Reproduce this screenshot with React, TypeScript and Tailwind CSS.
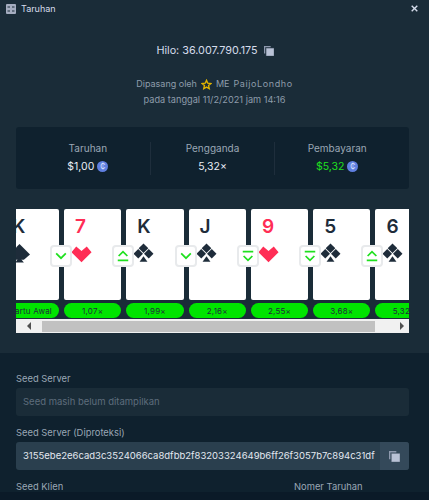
import React from "react";

const Spade = ({ className = "" }: { className?: string }) => (
  <svg viewBox="0 0 24 24" className={className} fill="#1e2c3a">
    <path d="M12 0.5 L17.5 6 L12 11.5 L6.5 6 Z" />
    <path d="M6 6.8 L11.4 12.2 L6 17.6 L0.6 12.2 Z" />
    <path d="M18 6.8 L23.4 12.2 L18 17.6 L12.6 12.2 Z" />
    <path d="M12 15 L16.5 21.5 H7.5 Z" />
  </svg>
);
const Heart = ({ className = "" }: { className?: string }) => (
  <svg viewBox="0 0 24 24" className={className} fill="#ff2d55">
    <path d="M12 22 L0.5 10.5 L6 4 L12 9 L18 4 L23.5 10.5 Z" />
  </svg>
);
const Down = () => (
  <svg viewBox="0 0 16 16" className="w-[14px] h-[14px]" fill="none" stroke="#1fe01f" strokeWidth="2">
    <path d="M2.5 5 L8 10.5 L13.5 5" />
  </svg>
);
const Up2 = () => (
  <svg viewBox="0 0 16 16" className="w-[14px] h-[14px]" fill="none" stroke="#1fe01f" strokeWidth="2">
    <path d="M3 8 L8 3 L13 8" />
    <path d="M2 13 H14" />
  </svg>
);
const Down2 = () => (
  <svg viewBox="0 0 16 16" className="w-[14px] h-[14px]" fill="none" stroke="#1fe01f" strokeWidth="2">
    <path d="M2 3 H14" />
    <path d="M3 8 L8 13 L13 8" />
  </svg>
);
const Copy = ({ className = "" }: { className?: string }) => (
  <svg viewBox="0 0 12 12" className={className}>
    <path d="M0 0 H8 V1.5 H1.5 V9 H0 Z" fill="#8e99ae" />
    <rect x="2.5" y="2.5" width="9.5" height="9.5" fill="#b9c2d6" stroke="#4e5f70" strokeWidth="0.5" />
  </svg>
);
const Coin = () => (
  <span className="inline-flex w-[11px] h-[11px] rounded-full bg-[#5f7fe0] items-center justify-center text-[7px] leading-none text-[#dfe6ff]">₵</span>
);

type C = { v: string; red?: boolean; pill: string; btn?: React.ReactNode };
const cards: C[] = [
  { v: "7", red: true, pill: "1,07×", btn: <Down /> },
  { v: "K", pill: "1,99×", btn: <Up2 /> },
  { v: "J", pill: "2,16×", btn: <Down /> },
  { v: "9", red: true, pill: "2,55×", btn: <Down2 /> },
  { v: "5", pill: "3,68×", btn: <Down2 /> },
  { v: "6", pill: "5,32×", btn: <Up2 /> },
];

const Card = ({ c }: { c: C }) => (
  <div className="relative shrink-0 w-[57.3px] flex flex-col">
    <div className="h-[91px] bg-white rounded-[2px] flex flex-col pl-[11px]">
      <span className={`mt-[6px] text-[19px] leading-[24px] font-semibold ${c.red ? "text-[#ff2d55]" : "text-[#1e2c3a]"}`}>{c.v}</span>
      <div className="mt-[4px] ml-[-4px]">
        {c.red ? <Heart className="w-[21px] h-[21px]" /> : <Spade className="w-[21px] h-[21px]" />}
      </div>
    </div>
    <div className="mt-[3px] h-[15px] rounded-full bg-[#00e400] flex items-center justify-center text-[8px] tracking-[0.2px] text-[#1e2c3a]">{c.pill}</div>
    {c.btn && (
      <div className="absolute left-[-14px] top-[36px] w-[22px] h-[22px] rounded-[4px] bg-white border-2 border-[#e8eaec] flex items-center justify-center">
        {c.btn}
      </div>
    )}
  </div>
);

const Stat = ({ label, children, border }: { label: string; children: React.ReactNode; border?: boolean }) => (
  <div className={`flex-1 flex flex-col items-center gap-[5px] h-[33px] ${border ? "border-l border-[#1e2e3c]" : ""}`}>
    <span className="text-[10px] leading-[13px] text-[#9aa7b5]">{label}</span>
    <span className="text-[10.5px] leading-[13px] flex items-center gap-[3px]">{children}</span>
  </div>
);

export default function App() {
  return (
    <div className="w-[429px] h-[500px] overflow-hidden bg-[#1a2c38] flex flex-col text-[#d5dceb]" style={{ fontFamily: "Inter, 'Noto Sans', sans-serif" }}>
      <div className="h-[353px] shrink-0 flex flex-col">
        <div className="flex items-center justify-between pl-[6px] pr-[11px] pt-[1px] h-[16px]">
          <div className="flex items-center gap-[5px]">
            <svg viewBox="0 0 10 10" className="w-[10px] h-[10px]">
              <rect width="10" height="10" rx="1" fill="#a5adc0" />
              <path d="M1.5 3 H4 M6 3 H8.5 M1.5 7 H4 M6 7 H8.5" stroke="#1a2c38" strokeWidth="1" />
            </svg>
            <span className="text-[9px] leading-[12px] text-[#d5dceb]">Taruhan</span>
          </div>
          <svg viewBox="0 0 10 10" className="w-[7px] h-[7px]" stroke="#d5dceb" strokeWidth="2">
            <path d="M1 1 L9 9 M9 1 L1 9" />
          </svg>
        </div>
        <div className="mt-[28px] pl-[1px] flex items-center justify-center gap-[6px] text-[10.8px] leading-[14px] text-[#d5dceb]">
          <span>Hilo: 36.007.790.175</span>
          <Copy className="w-[10px] h-[10px]" />
        </div>
        <div className="mt-[18px] h-[16px] flex items-center justify-center gap-[3px] text-[9px] leading-[16px] text-[#8e9cab]">
          <span>Dipasang oleh</span>
          <svg viewBox="0 0 24 24" className="w-[11px] h-[11px] mx-[1px]" fill="none" stroke="#e0b400" strokeWidth="3">
            <path d="M12 3 L14.8 9.2 L21.5 9.9 L16.5 14.4 L18 21 L12 17.6 L6 21 L7.5 14.4 L2.5 9.9 L9.2 9.2 Z" />
          </svg>
          <span>ME</span>
          <span className="tracking-[0.6px] ml-[1px]">PaijoLondho</span>
        </div>
        <div className="text-center h-[16px] text-[9.2px] leading-[16px] text-[#8e9cab]">pada tanggal 11/2/2021 jam 14:16</div>
        <div className="mt-[19px] ml-[16px] mr-[20px] h-[62px] rounded-[3px] bg-[#0f212e] flex items-center px-[10px]">
          <Stat label="Taruhan">
            <span className="text-[#e8edf5]">$1,00</span>
            <Coin />
          </Stat>
          <Stat label="Pengganda" border>
            <span className="text-[#e8edf5]">5,32×</span>
          </Stat>
          <Stat label="Pembayaran" border>
            <span className="text-[#1fe01f]">$5,32</span>
            <Coin />
          </Stat>
        </div>
        <div className="mt-[20px] ml-[16px] mr-[20px] overflow-hidden">
          <div className="flex gap-[5px]">
            <div className="relative shrink-0 w-[43px] overflow-hidden flex flex-col">
              <div className="h-[91px] bg-white rounded-r-[2px] overflow-hidden relative">
                <span className="absolute left-[-4px] top-[6px] text-[19px] leading-[24px] font-semibold text-[#1e2c3a]">K</span>
                <svg viewBox="0 0 24 24" className="absolute left-[-7px] top-[35px] w-[21px] h-[21px]" fill="#1e2c3a">
                  <path d="M12 0 L24 12 L17 18 L7 18 L0 12 Z" />
                  <path d="M12 15 L17 21 H7 Z" />
                </svg>
              </div>
              <div className="mt-[3px] h-[15px] rounded-r-full bg-[#00e400] flex items-center justify-end pr-[7px] text-[8px] tracking-[0.2px] text-[#1e2c3a] whitespace-nowrap">Kartu Awal</div>
            </div>
            {cards.map((c, i) => (
              <Card key={i} c={c} />
            ))}
          </div>
          <div className="mt-[1px] h-[14px] bg-[#f1f1f1] flex items-center">
            <div className="w-[26px] flex justify-center">
              <span className="w-0 h-0 border-y-[4px] border-y-transparent border-r-[4px] border-r-[#505050]" />
            </div>
            <div className="flex-1 h-[11px] bg-[#c1c1c1]" />
            <div className="w-[34px] flex justify-end pr-[5px]">
              <span className="w-0 h-0 border-y-[4px] border-y-transparent border-l-[4px] border-l-[#505050]" />
            </div>
          </div>
        </div>
      </div>
      <div className="h-[139px] shrink-0 bg-[#0f212e] pl-[16px] pr-[20px] pt-[20px] flex flex-col overflow-hidden">
        <div className="text-[9.4px] leading-[12px] text-[#9aa7b5]">Seed Server</div>
        <div className="mt-[3px] h-[28px] shrink-0 rounded-[3px] bg-[#1a2c38] px-[7px] flex items-center text-[9.5px] text-[#5e6d7c]">Seed masih belum ditampilkan</div>
        <div className="mt-[11px] text-[9.4px] leading-[12px] text-[#9aa7b5]">Seed Server (Diproteksi)</div>
        <div className="mt-[3px] h-[28px] shrink-0 rounded-[3px] bg-[#2a3f4e] flex items-center overflow-hidden">
          <span className="flex-1 pl-[7px] text-[9.5px] text-[#e3e8f0] whitespace-nowrap overflow-hidden">3155ebe2e6cad3c3524066ca8dfbb2f83203324649b6ff26f3057b7c894c31df</span>
          <div className="w-[29px] shrink-0 h-full bg-[#34495a] flex items-center justify-center">
            <Copy className="w-[11px] h-[11px]" />
          </div>
        </div>
        <div className="mt-[11px] flex text-[9.4px] leading-[12px] text-[#9aa7b5]">
          <span className="w-[278px]">Seed Klien</span>
          <span>Nomer Taruhan</span>
        </div>
      </div>
      <div className="flex-1 bg-[#0b1a28]" />
    </div>
  );
}
